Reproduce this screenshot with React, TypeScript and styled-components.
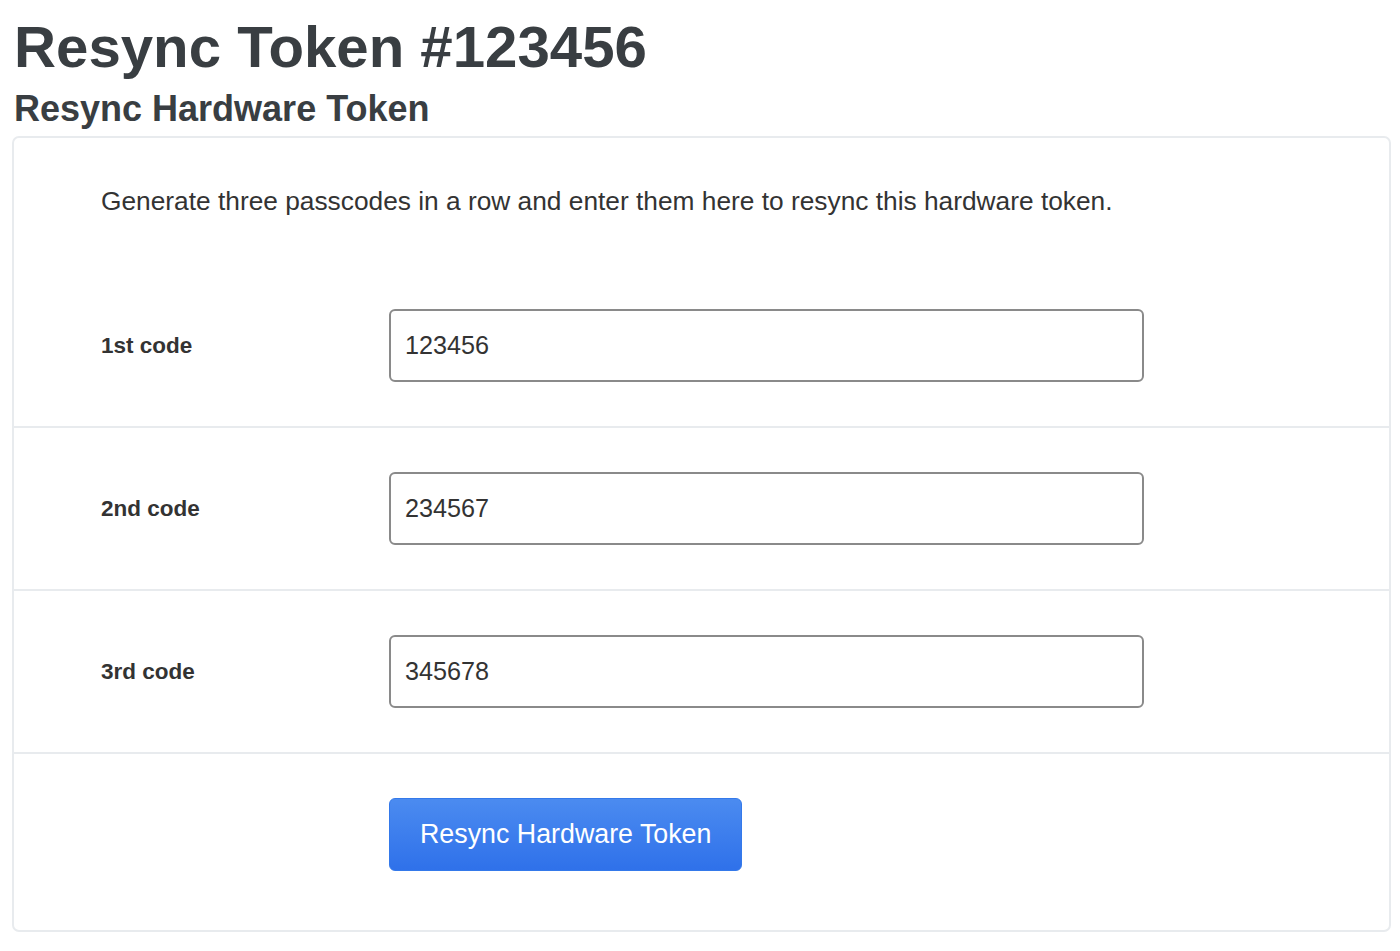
import React from 'react';
import styled, { createGlobalStyle } from 'styled-components';

const GlobalStyle = createGlobalStyle`
  html, body {
    margin: 0;
    padding: 0;
    background: #ffffff;
    font-family: "Liberation Sans", Arial, Helvetica, sans-serif;
    color: #333;
  }
`;

const Page = styled.div`
  padding: 0 9px 0 12px;
`;

const Title = styled.h1`
  margin: 0;
  padding: 13px 0 0 2px;
  font-size: 58.2px;
  line-height: 68px;
  font-weight: bold;
  color: #393e42;
`;

const Subtitle = styled.h2`
  margin: 0;
  padding: 3px 0 0 2px;
  font-size: 36px;
  line-height: 50px;
  font-weight: bold;
  color: #393e42;
`;

const Panel = styled.div`
  margin-top: 2px;
  border: 2px solid #e8ebee;
  border-radius: 7px;
  padding-bottom: 15px;
`;

const Intro = styled.p`
  margin: 0;
  padding: 46px 0 47px 87px;
  font-size: 26.3px;
  line-height: 34px;
  color: #333;
`;

const Row = styled.div<{ $divided?: boolean }>`
  display: grid;
  grid-template-columns: 288px 755px;
  align-items: center;
  padding: 44px 0 44px 87px;
  border-top: ${p => (p.$divided ? '2px solid #e8ebee' : 'none')};
`;

const Label = styled.label`
  font-size: 22.5px;
  font-weight: bold;
  color: #333;
`;

const Input = styled.input`
  box-sizing: border-box;
  width: 755px;
  height: 73px;
  padding: 0 14px;
  border: 2px solid #8a8a8a;
  border-radius: 6px;
  font-family: "Liberation Sans", Arial, Helvetica, sans-serif;
  font-size: 25.2px;
  color: #333;
  outline: none;
  background: #fff;
`;

const Button = styled.button`
  box-sizing: border-box;
  grid-column: 2;
  justify-self: start;
  height: 73px;
  padding: 0 30px;
  border: 1px solid #3479ea;
  border-radius: 6px;
  background: linear-gradient(to bottom, #4b8bf0, #2f71ea);
  color: #fff;
  font-family: "Liberation Sans", Arial, Helvetica, sans-serif;
  font-size: 26.8px;
  cursor: pointer;
`;

const codes = [
  { label: '1st code', value: '123456' },
  { label: '2nd code', value: '234567' },
  { label: '3rd code', value: '345678' },
];

export default function App() {
  return (
    <>
      <GlobalStyle />
      <Page>
        <Title>Resync Token #123456</Title>
        <Subtitle>Resync Hardware Token</Subtitle>
        <Panel>
          <Intro>
            Generate three passcodes in a row and enter them here to resync this hardware token.
          </Intro>
          {codes.map((c, i) => (
            <Row key={c.label} $divided={i > 0}>
              <Label>{c.label}</Label>
              <Input defaultValue={c.value} />
            </Row>
          ))}
          <Row $divided>
            <Button type="button">Resync Hardware Token</Button>
          </Row>
        </Panel>
      </Page>
    </>
  );
}
